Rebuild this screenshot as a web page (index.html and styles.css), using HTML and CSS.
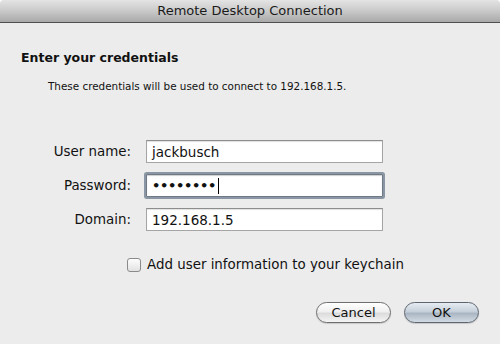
FILE: index.html
```html
<!DOCTYPE html>
<html lang="en">
<head>
    <meta charset="UTF-8">
    <title>Remote Desktop Connection</title>
    <link rel="stylesheet" href="styles.css">
</head>
<body>
    <div class="dialog">
        <!-- Title bar -->
        <div class="titlebar">Remote Desktop Connection</div>

        <div class="dialog-body">
            <h1 class="heading">Enter your credentials</h1>
            <p class="note">These credentials will be used to connect to 192.168.1.5.</p>

            <!-- Credential fields -->
            <div class="fields">
                <label class="field-label" for="user">User name:</label>
                <div class="field">jackbusch</div>

                <label class="field-label" for="pass">Password:</label>
                <div class="field focused"><span class="dots">••••••••</span><span class="caret"></span></div>

                <label class="field-label" for="domain">Domain:</label>
                <div class="field">192.168.1.5</div>
            </div>

            <div class="keychain">
                <span class="checkbox"></span>
                <span>Add user information to your keychain</span>
            </div>

            <div class="buttons">
                <button class="btn">Cancel</button>
                <button class="btn default">OK</button>
            </div>
        </div>
    </div>
</body>
</html>
```

FILE: styles.css
```css
* {
    margin: 0;
    padding: 0;
    box-sizing: border-box;
}

body {
    font-family: 'DejaVu Sans', 'Liberation Sans', sans-serif;
    background: #fff;
    width: 500px;
    height: 344px;
    overflow: hidden;
    color: #111;
}

.dialog {
    height: 344px;
    background: #ececec;
    border-radius: 4px 4px 0 0;
    overflow: hidden;
}

.titlebar {
    height: 23px;
    background: linear-gradient(#e4e4e4 0%, #c9c9c9 50%, #a9a9a9 100%);
    border-bottom: 1px solid #505050;
    text-align: center;
    font-size: 13px;
    line-height: 22px;
    color: #1a1a1a;
}

.dialog-body {
    padding: 27px 0 0 21px;
}

.heading {
    font-size: 12.5px;
    font-weight: bold;
    line-height: 16px;
}

.note {
    font-size: 10.4px;
    margin: 13px 0 0 27px;
    line-height: 14px;
}

.fields {
    display: grid;
    grid-template-columns: 110px 237px;
    column-gap: 15px;
    row-gap: 11px;
    margin-top: 47px;
    align-items: center;
}

.field-label {
    text-align: right;
    font-size: 13.4px;
}

.field {
    height: 23px;
    background: #fff;
    border: 1px solid #a5a5a5;
    border-top-color: #8d8d8d;
    box-shadow: inset 0 1px 1px rgba(0, 0, 0, 0.12);
    font-size: 13.5px;
    line-height: 20px;
    padding-left: 5px;
    display: flex;
    align-items: center;
}

.field.focused {
    border: 1px solid #6f7a86;
    box-shadow: 0 0 0 2px #8a96a3, inset 0 1px 1px rgba(0, 0, 0, 0.2);
    border-radius: 1px;
}

.dots {
    font-size: 13px;
    font-weight: bold;
    letter-spacing: -0.3px;
}

.caret {
    width: 1px;
    height: 16px;
    background: #000;
    margin-left: 2px;
}

.keychain {
    display: flex;
    align-items: center;
    gap: 6px;
    margin: 26px 0 0 106px;
    font-size: 13.4px;
}

.checkbox {
    width: 14px;
    height: 14px;
    border: 1px solid #8a8a8a;
    border-radius: 3px;
    background: linear-gradient(#fdfdfd, #e2e2e2);
}

.buttons {
    display: flex;
    justify-content: flex-end;
    gap: 13px;
    margin: 30px 21px 0 0;
}

.btn {
    width: 75px;
    height: 21px;
    border-radius: 11px;
    border: 1px solid #6e6e6e;
    font-family: inherit;
    font-size: 13px;
    color: #111;
    background: linear-gradient(#ffffff 0%, #f0f0f0 45%, #dcdcdc 55%, #f4f4f4 100%);
    box-shadow: 0 1px 1px rgba(0, 0, 0, 0.15);
}

.btn.default {
    border-color: #5d6670;
    background: linear-gradient(#e6ecf2 0%, #c6d0da 45%, #aab6c3 55%, #d2dbe4 100%);
}
```
